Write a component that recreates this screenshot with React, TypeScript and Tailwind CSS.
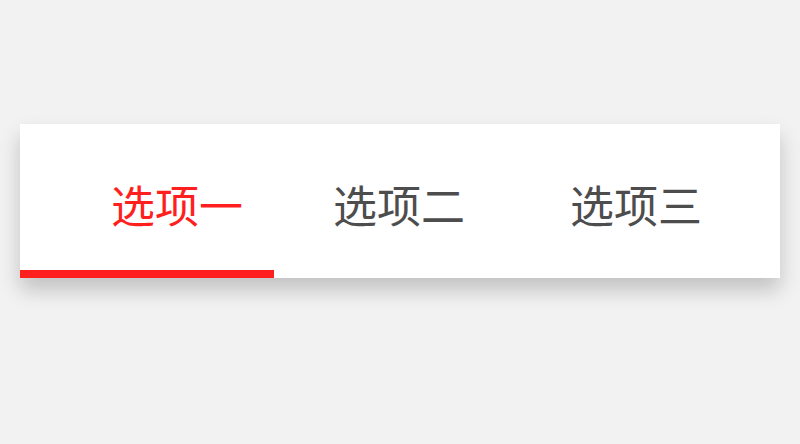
import React, { useState } from "react";

const tabs = ["选项一", "选项二", "选项三"];

export default function App() {
  const [active, setActive] = useState(0);

  return (
    <div className="min-h-screen w-full bg-[#f2f2f2] pt-[124px] px-5" style={{ fontFamily: '"Noto Sans CJK SC", "Noto Sans", sans-serif' }}>
      <div className="bg-white shadow-[0_12px_20px_rgba(0,0,0,0.2)] h-[154px] flex flex-col">
        <div className="flex flex-1 items-center pl-[91px] pt-[14px]">
          {tabs.map((t, i) => (
            <button
              key={t}
              onClick={() => setActive(i)}
              className={
                "text-[44px] leading-none " +
                (i === 1 ? "ml-[90px] " : i === 2 ? "ml-[105px] " : "") +
                (active === i ? "text-[#ff1f1f]" : "text-[#4d4d4d]")
              }
            >
              {t}
            </button>
          ))}
        </div>
        {/* active indicator */}
        <div className="h-[8px] w-[254px] bg-[#ff1f1f]" />
      </div>
    </div>
  );
}
